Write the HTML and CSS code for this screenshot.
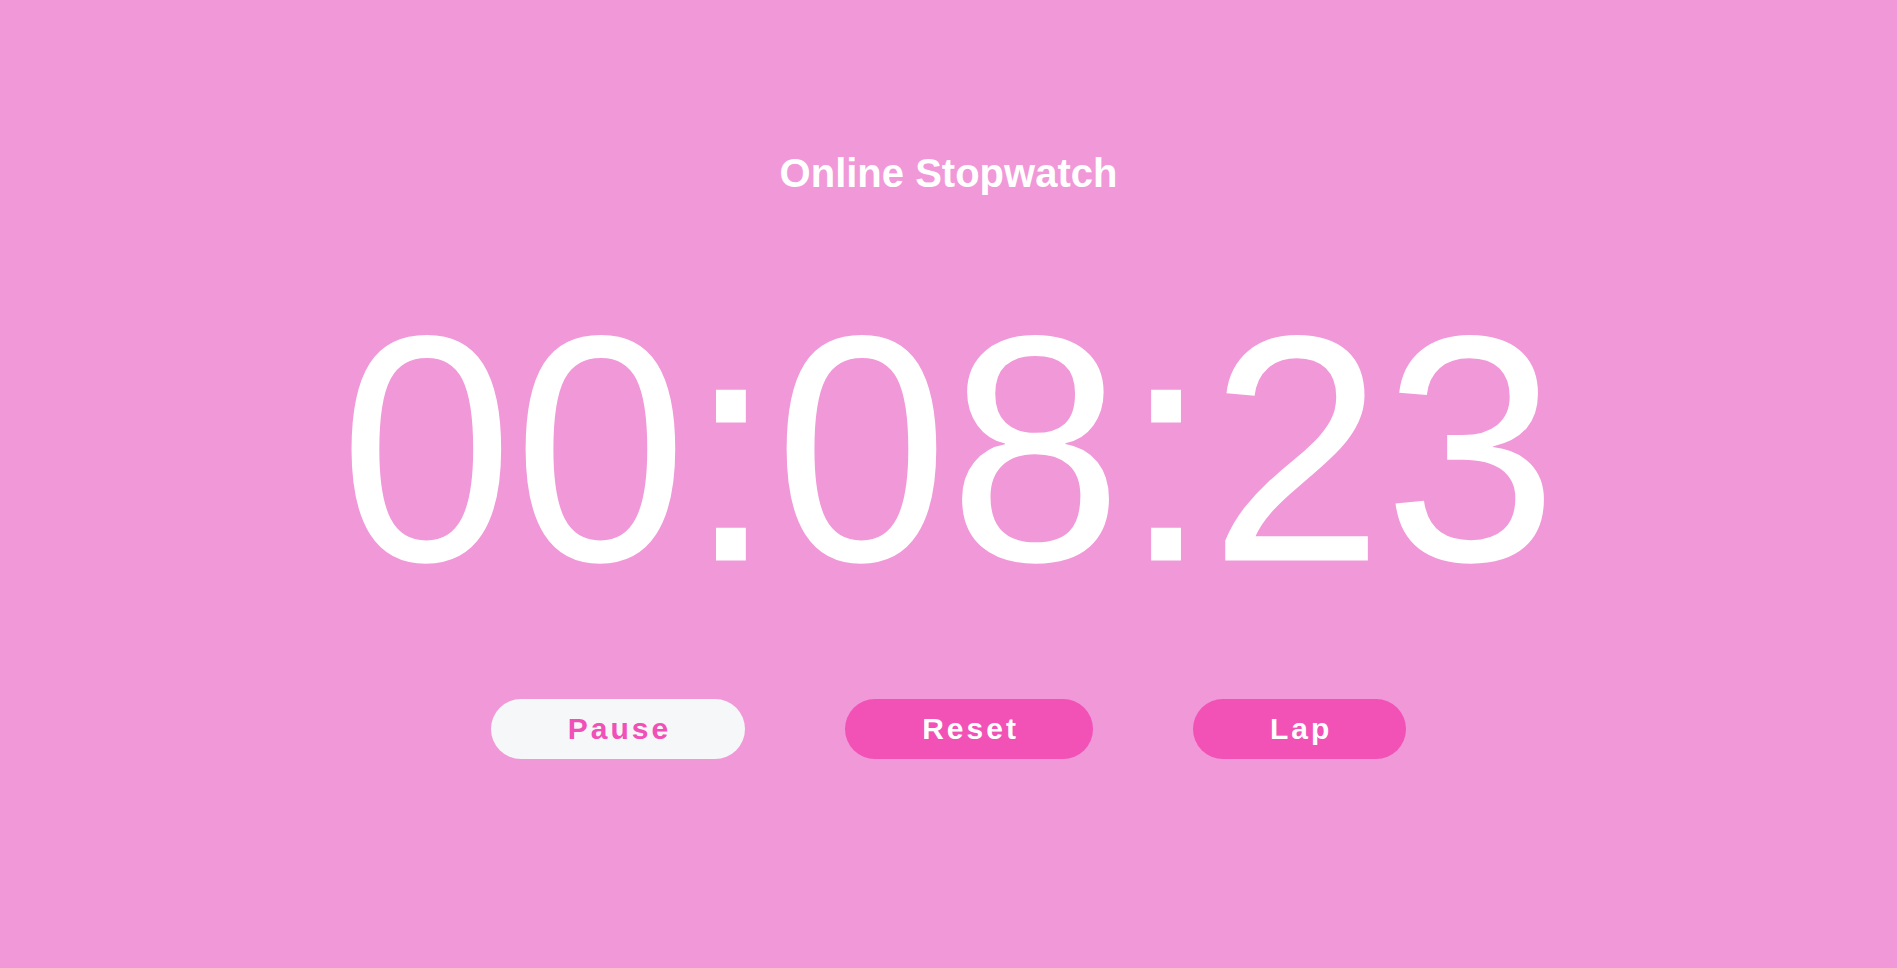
FILE: index.html
```html
<!DOCTYPE html>
<html lang="en">
<head>
<meta charset="utf-8">
<title>Online Stopwatch</title>
<link rel="stylesheet" href="styles.css">
</head>
<body>
<main class="app">
  <h1 class="title">Online Stopwatch</h1>
  <div class="time">00:08:23</div>
  <div class="controls">
    <button class="btn btn-light">Pause</button>
    <button class="btn btn-pink">Reset</button>
    <button class="btn btn-pink">Lap</button>
  </div>
</main>
</body>
</html>
```
FILE: styles.css
```css
html, body {
  margin: 0;
  padding: 0;
}
body {
  background: #f198d8;
  min-height: 100vh;
  font-family: "Liberation Sans", Arial, sans-serif;
  overflow: hidden;
}
.app {
  display: flex;
  flex-direction: column;
  align-items: center;
}
.title {
  margin: 150px 0 0;
  font-size: 40px;
  line-height: 46px;
  font-weight: 700;
  color: #ffffff;
}
.time {
  margin-top: 96px;
  font-family: "Liberation Sans", Arial, sans-serif;
  font-weight: 400;
  font-size: 313px;
  line-height: 1;
  height: 313px;
  color: #ffffff;
  white-space: nowrap;
  transform: scaleY(1.032);
  transform-origin: 50% 50%;
}
.controls {
  margin-top: 94px;
  display: flex;
  gap: 100px;
}
.btn {
  height: 60px;
  padding: 0 74px 0 77px;
  border: none;
  border-radius: 30px;
  font-family: "Liberation Sans", Arial, sans-serif;
  font-weight: 700;
  font-size: 30px;
  letter-spacing: 3px;
  cursor: pointer;
}
.btn-light {
  background: #f6f7f9;
  color: #f150b7;
}
.btn-pink {
  background: #f251b6;
  color: #ffffff;
}
```
